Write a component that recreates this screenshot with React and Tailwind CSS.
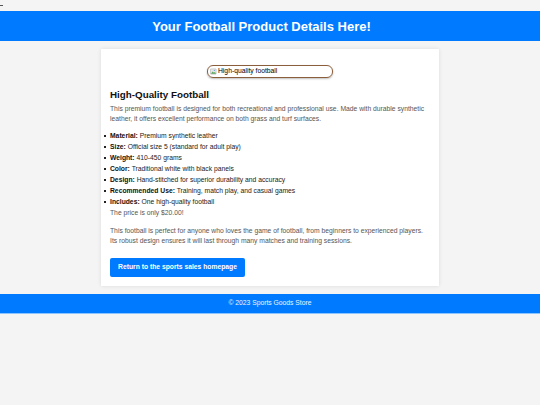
import React from "react";

const specs = [
  ["Material:", "Premium synthetic leather"],
  ["Size:", "Official size 5 (standard for adult play)"],
  ["Weight:", "410-450 grams"],
  ["Color:", "Traditional white with black panels"],
  ["Design:", "Hand-stitched for superior durability and accuracy"],
  ["Recommended Use:", "Training, match play, and casual games"],
  ["Includes:", "One high-quality football"],
];

// broken-image placeholder, like the browser draws for a missing file
const BrokenImage = () => (
  <span className="inline-flex items-center w-[126px] h-[13px] px-[2px] rounded-[6px] border border-[#8b5e3c] shadow-[0_1px_2px_rgba(0,0,0,0.25)] text-[6.75px] text-black leading-none">
    <svg width="7" height="7" viewBox="0 0 16 16" className="mr-[1px] shrink-0">
      <rect x="1" y="2" width="13" height="12" rx="1" fill="#e8e8e8" stroke="#9a9a9a" />
      <path d="M2 13 L6 8 L9 11 L11 9 L14 13 Z" fill="#5aa55a" />
      <circle cx="10" cy="5.5" r="1.5" fill="#6fa8dc" />
    </svg>
    High-quality football
  </span>
);

export default function App() {
  return (
    <div className="min-h-[405px] bg-[#f4f4f4] font-['Liberation_Sans',Arial,sans-serif] text-[#333]">
      <div className="h-[11px] relative">
        <div className="absolute left-0 top-[5px] w-[3px] h-[1px] bg-[#555]" />
      </div>

      <header className="h-[30px] bg-[#007bff] flex items-center justify-center pr-[17px]">
        <h1 className="text-white font-bold text-[13px] leading-none">
          Your Football Product Details Here!
        </h1>
      </header>

      <main className="w-[338px] mx-auto mt-[8px] bg-white shadow-[0_0_4px_rgba(0,0,0,0.1)] px-[9px] pt-[16px] pb-[9px]">
        <div className="flex justify-center">
          <BrokenImage />
        </div>

        <h2 className="mt-[11px] text-[9.8px] leading-[12px] font-bold text-[#111]">
          High-Quality Football
        </h2>

        <p className="mt-[3px] text-[6.75px] leading-[9.7px] text-[#555]">
          This premium football is designed for both recreational and professional use. Made with durable synthetic
          leather, it offers excellent performance on both grass and turf surfaces.
        </p>

        <ul className="mt-[7px] text-[6.75px] leading-[11px] text-[#222]">
          {specs.map(([label, value]) => (
            <li key={label} className="flex">
              <span className="w-[6px] -ml-[6px] flex items-center">
                <span className="w-[2px] h-[2px] bg-[#222]" />
              </span>
              <span>
                <strong className="text-[#111]">{label}</strong> {value}
              </span>
            </li>
          ))}
        </ul>
        <p className="text-[6.75px] leading-[11px] text-[#555]">The price is only $20.00!</p>

        <p className="mt-[8px] text-[6.75px] leading-[9.7px] text-[#555]">
          This football is perfect for anyone who loves the game of football, from beginners to experienced players.
          Its robust design ensures it will last through many matches and training sessions.
        </p>

        <button className="mt-[12px] h-[19px] w-[135px] rounded-[2px] bg-[#007bff] text-white font-bold text-[6.75px]">
          Return to the sports sales homepage
        </button>
      </main>

      <footer className="mt-[8px] h-[20px] bg-[#007bff] border-b border-[#8cc4ff] flex items-center justify-center text-[6.75px] text-[#eef5ff]">
        © 2023 Sports Goods Store
      </footer>
    </div>
  );
}
